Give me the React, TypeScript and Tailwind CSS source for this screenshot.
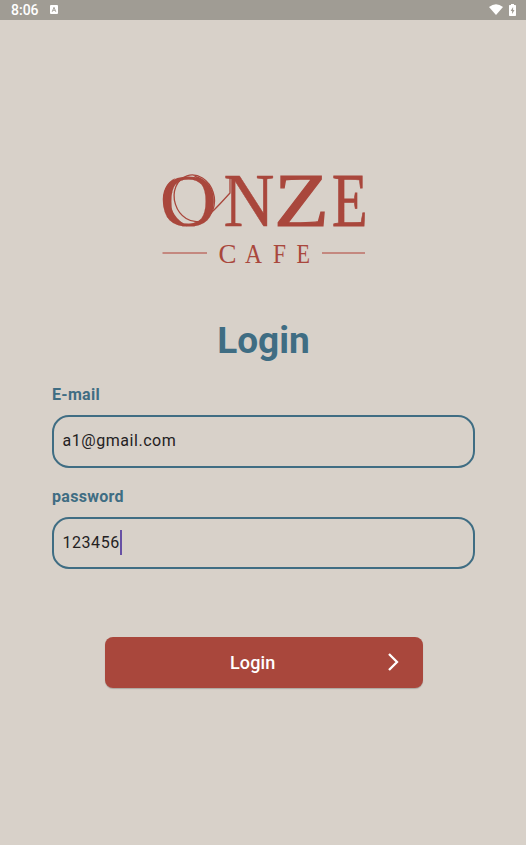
import React from "react";

const serif = '"Liberation Serif", serif';

function StatusBar() {
  return (
    <header className="flex h-[19.5px] items-center bg-[#a09c94] pl-[11px] pr-[10px] text-white">
      <span className="text-[14px] font-medium leading-none">8:06</span>
      <svg className="ml-[11px]" width="8" height="9" viewBox="0 0 8 9">
        <rect width="8" height="9" rx="1" fill="#fff" />
        <path d="M2.2 6.8 4 2.3l1.8 4.5M2.8 5.3h2.4" fill="none" stroke="#a09c94" strokeWidth="0.9" />
      </svg>
      <svg className="ml-auto" width="14" height="11" viewBox="0 0 14 11">
        <path d="M0 2.900Q7-2.600 14 2.900L7 11Z" fill="#fff" />
      </svg>
      <svg className="ml-[6px]" width="7" height="12" viewBox="0 0 7 12">
        <path d="M2 0h3v1h1.300q.7 0 .7.7v9.600q0 .7-.7.7H.7Q0 12 0 11.300V1.700Q0 1 .7 1H2Z" fill="#fff" />
        <path d="M4.100 3 1.600 7h1.500v3l2.400-4H4.100Z" fill="#a09c94" />
      </svg>
    </header>
  );
}

function Logo() {
  return (
    <svg className="mx-auto block overflow-visible" width="206" height="92" viewBox="161 173 206 92" fill="#a9473c" style={{ fontFamily: serif }}>
      <g fontSize="77" stroke="#a9473c" strokeWidth="0.5">
        <text x="160" y="225.500" fontSize="75" strokeWidth="0.2" textLength="57" lengthAdjust="spacingAndGlyphs">O</text>
        <text x="223.500" y="226" textLength="51" lengthAdjust="spacingAndGlyphs">N</text>
        <text x="274" y="226" strokeWidth="1.2" textLength="55" lengthAdjust="spacingAndGlyphs">Z</text>
        <text x="332" y="226" strokeWidth="0.8" textLength="35.500" lengthAdjust="spacingAndGlyphs">E</text>
      </g>
      {/* Swash that wraps the first initial and joins the second */}
      <path d="M175.500 178C157 185 157 222 187 226C166 214 164 187 175.500 178Z" />
      <path d="M193 175.500C209 177 220 199 209 216C210 199 207 184 193 175.500Z" />
      <g fill="none" stroke="#a9473c" strokeWidth="1.300">
        <ellipse cx="194.300" cy="198.300" rx="19.800" ry="23.700" transform="rotate(-18 194.300 198.300)" />
        <path d="M186 225.500C205 223 216 208 230 193V177" />
      </g>
      <g fontSize="28">
        <text x="218.500" y="262.500" textLength="18" lengthAdjust="spacingAndGlyphs">C</text>
        <text x="245" y="262.500" textLength="17" lengthAdjust="spacingAndGlyphs">A</text>
        <text x="273" y="262.500" textLength="13" lengthAdjust="spacingAndGlyphs">F</text>
        <text x="296.500" y="262.500" textLength="13.500" lengthAdjust="spacingAndGlyphs">E</text>
      </g>
      <path d="M162.500 253H207M322 253h43" stroke="#bd7067" strokeWidth="1.500" />
    </svg>
  );
}

function Field({ label, value, focused = false }: { label: string; value: string; focused?: boolean }) {
  return (
    <div>
      <div className="h-[20px] text-[16px] font-bold leading-[21px] tracking-[0.3px] text-[#3f6d83]">{label}</div>
      <div className="mt-[11px] flex h-[52.500px] items-center rounded-[17px] border-2 border-[#3f6d83] pl-[8.500px] text-[16px] leading-[22px] tracking-[0.54px] text-[#24211f]">
        <span>{value}</span>
        {focused && <span className="h-[25px] w-[2px] bg-[#6750a4]" />}
      </div>
    </div>
  );
}

export default function App() {
  return (
    <div className="h-[845px] w-[526px] overflow-hidden bg-[#d8d1c9] font-['Roboto',sans-serif]">
      <StatusBar />
      <main className="pl-[52px] pr-[51px] pt-[153.500px]">
        <Logo />
        <h1 className="mt-[53px] text-center text-[37px] font-bold leading-[46px] text-[#3f6d83]">Login</h1>
        <div className="mt-[20px] flex flex-col gap-[18px]">
          <Field label="E-mail" value="a1@gmail.com" />
          <Field label="password" value="123456" focused />
        </div>
        <button className="ml-[52.500px] mt-[68px] flex h-[51px] w-[318px] items-center rounded-[8px] bg-[#a9473c] pl-[125.500px] pr-[24px] text-[18px] font-medium tracking-[0.1px] text-white shadow-[0_1px_1px_rgba(0,0,0,0.2)]">
          <span className="-mt-px">Login</span>
          <svg className="-mt-px ml-auto" width="12" height="18" viewBox="0 0 12 18" fill="none" stroke="#fff" strokeWidth="2.300">
            <path d="m2 1 8 8-8 8" />
          </svg>
        </button>
      </main>
    </div>
  );
}
